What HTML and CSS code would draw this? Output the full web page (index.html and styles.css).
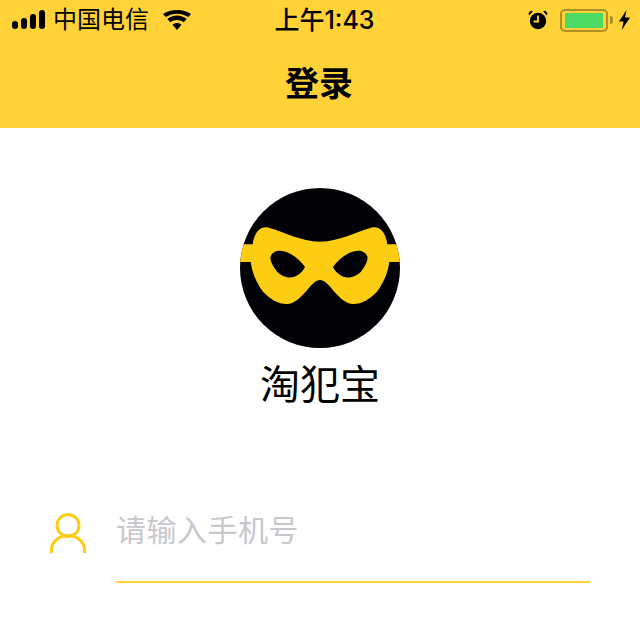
FILE: index.html
```html
<!DOCTYPE html>
<html lang="zh">
<head>
<meta charset="utf-8">
<title>登录</title>
<link rel="stylesheet" href="styles.css">
</head>
<body>
<header class="top">
  <div class="status">
    <div class="status-side">
      <svg class="signal" width="34" height="20" viewBox="0 0 34 20"><rect x="0" y="11" width="6" height="8" rx="3"/><rect x="9" y="8" width="6" height="11" rx="3"/><rect x="18" y="4" width="6" height="15" rx="3"/><rect x="27" y="0" width="6" height="19" rx="3"/></svg>
      <span class="carrier">中国电信</span>
      <svg class="wifi" width="28" height="20" viewBox="0 0 28 20"><path d="M14 20L9.500 14.800C12 12.500 16 12.500 18.500 14.800zM7.300 12.300L4.300 8.900C9.800 4.200 18.200 4.200 23.700 8.900L20.700 12.300C16.800 9.200 11.200 9.200 7.300 12.300zM2.800 7.100L0 4C7.800 -1.300 20.200 -1.300 28 4L25.200 7.100C18.600 2.600 9.400 2.600 2.800 7.100z"/></svg>
    </div>
    <span class="time">上午1:43</span>
    <div class="status-side status-right">
      <svg class="alarm" width="20" height="20" viewBox="0 0 20 20"><circle cx="10" cy="11" r="8.200"/><path d="M1 5.500L4.800 1.500 2.800 0.800 0.600 3zM19 5.500L15.200 1.500 17.200 0.800 19.400 3z"/><path d="M10 5.500V11.500H5.500" fill="none" stroke="#ffd338" stroke-width="1.800"/></svg>
      <div class="battery"><div class="battery-fill"></div></div>
      <div class="battery-cap"></div>
      <svg class="bolt" width="13" height="20" viewBox="0 0 13 20"><path d="M8.500 0L1 11.500H5.500L3.800 20 12 7.500H7z"/></svg>
    </div>
  </div>
  <h1 class="title">登录</h1>
</header>
<main class="main">
  <svg class="logo" width="160" height="160" viewBox="0 0 160 160">
    <defs><clipPath id="disc"><circle cx="80" cy="80" r="80"/></clipPath></defs>
    <circle cx="80" cy="80" r="80" fill="#020207"/>
    <path clip-path="url(#disc)" fill="#fdcd14" fill-rule="evenodd" d="M26.700 39.300C40 42 60 53.700 80 53.700C100 53.700 120 42 133.300 39.300C141 38.500 146 46 147.300 56.300H160V74H149.300C148 85 143 96 137 103.700C130 111 122 116 113.300 116C105 116 98 108 92 101C88 96 84 92 80 92C76 92 72 96 68 101C62 108 55 116 46.700 116C38 116 30 111 23 103.700C17 96 12 85 10.700 74H0V56.300H12.700C14 46 19 38.500 26.700 39.300ZM30.500 69C31.500 65 35 62.700 40 62.700C50 63 60 72 65 79C62 85 56 89.500 50 89.500C45 89.500 40 87 36.500 83C33 78 30 73 30.500 69ZM127.500 69C126.500 65 123 62.700 118 62.700C108 63 98 72 93 79C96 85 102 89.500 108 89.500C113 89.500 118 87 121.500 83C125 78 128 73 127.500 69Z"/>
  </svg>
  <p class="brand">淘犯宝</p>
  <form class="field">
    <svg class="user" width="36" height="40" viewBox="0 0 36 40"><g fill="none" stroke="#fdcd14" stroke-width="3"><circle cx="18" cy="12.500" r="11"/><path d="M1.500 40V37C1.500 29 9 22.500 18 22.500S34.500 29 34.500 37V40"/></g></svg>
    <div class="input-wrap"><span class="placeholder">请输入手机号</span></div>
  </form>
</main>
</body>
</html>
```
FILE: styles.css
```css
* { box-sizing: border-box; }
html, body { margin: 0; padding: 0; }
body {
  width: 640px;
  height: 620px;
  overflow: hidden;
  background: #fff;
  color: #000;
  font-family: "Noto Sans CJK SC", "Liberation Sans", sans-serif;
}
.top {
  height: 128px;
  background: #ffd338;
  display: flex;
  flex-direction: column;
}
.status {
  height: 40px;
  padding: 0 9px 0 12px;
  display: grid;
  grid-template-columns: 1fr auto 1fr;
  align-items: center;
  flex: none;
}
.status-side { display: flex; align-items: center; }
.status-right { justify-content: flex-end; }
.signal { margin-right: 7px; }
.carrier { font-size: 24px; line-height: 36px; margin: 0 14px 4px 0; }
.time {
  margin: 0 0 0 6px;
  font-family: Inter, "Noto Sans CJK SC", sans-serif;
  font-size: 25px;
  line-height: 40px;
  font-weight: 500;
}
.alarm { margin-right: 12px; }
.battery {
  width: 48px;
  height: 23px;
  border: 2px solid #ae8f27;
  border-radius: 5px;
  padding: 2px 3px;
}
.battery-fill { width: 38px; height: 15px; background: #4cd964; }
.battery-cap {
  width: 3px;
  height: 8px;
  margin-left: 2px;
  background: #ae8f27;
  border-radius: 0 3px 3px 0;
}
.bolt { margin-left: 5px; }
.title {
  flex: 1;
  margin: 0 2px 6px 0;
  display: flex;
  align-items: center;
  justify-content: center;
  font-size: 34px;
  font-weight: 700;
}
.main {
  display: flex;
  flex-direction: column;
  align-items: center;
  padding-top: 60px;
}
.logo { display: block; }
.brand {
  margin: 5px 0 0;
  font-size: 40px;
  line-height: 58px;
  font-weight: 400;
}
.field {
  width: 640px;
  margin-top: 102px;
  padding: 0 50px;
  display: flex;
  align-items: flex-start;
}
.user { flex: none; }
.input-wrap {
  flex: none;
  width: 474px;
  height: 70px;
  margin-left: 30px;
  border-bottom: 2px solid #ffd338;
}
.placeholder {
  display: block;
  margin-top: -4px;
  font-size: 30px;
  letter-spacing: 0.5px;
  line-height: 38px;
  color: #c7c7cd;
}
```
